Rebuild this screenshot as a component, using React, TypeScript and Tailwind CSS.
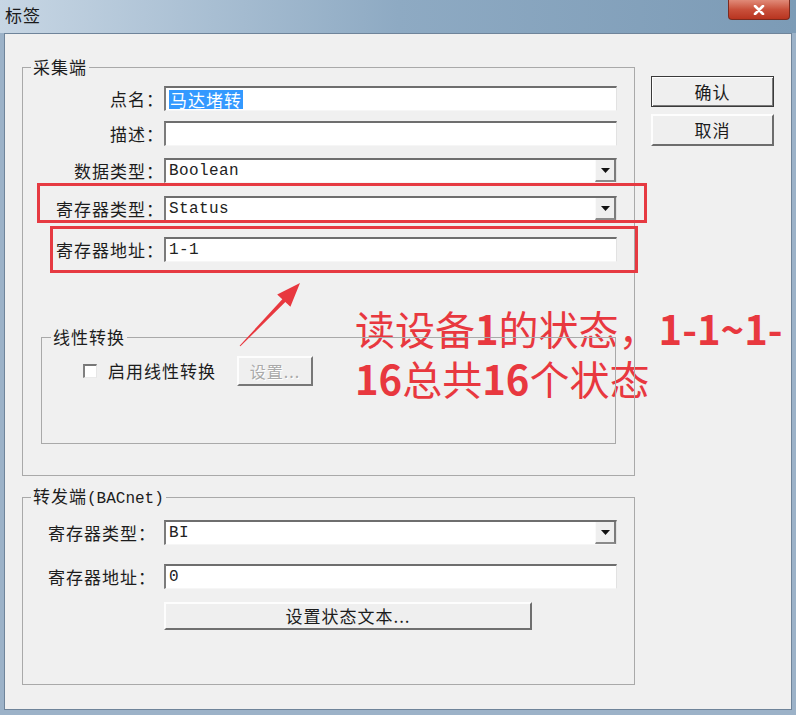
import type { ReactNode } from "react";

// Classic Windows sunken edit box
function Field({ children, dropdown, mono }: { children?: ReactNode; dropdown?: boolean; mono?: boolean }) {
  return (
    <div className="flex h-[25px] w-[453px] border-t-2 border-l-2 border-r border-b border-t-[#6e6e6e] border-l-[#7b7b7b] border-r-[#e2e2e2] border-b-[#f6f6f6] bg-white">
      <div
        className={
          mono
            ? "flex flex-1 items-center pl-[3px] font-['Liberation_Mono',monospace] text-[16px] tracking-[0.4px] text-[#222]"
            : "flex flex-1 items-center pl-[1px] text-[16px]"
        }
      >
        {children}
      </div>
      {dropdown && (
        <div className="flex h-full w-[21px] items-center justify-center border-r-2 border-b-2 border-l border-r-[#7c7c7c] border-b-[#8a8a8a] border-l-[#fafafa] bg-[#efefef]">
          <svg width="9" height="5" viewBox="0 0 9 5">
            <polygon points="0,0 9,0 4.5,5" fill="#111" />
          </svg>
        </div>
      )}
    </div>
  );
}

function Label({ text, className }: { text: string; className: string }) {
  return <div className={className + " text-right text-[17px] leading-[25px] tracking-[1px]"}>{text}</div>;
}

export default function App() {
  return (
    <div className="relative h-[715px] w-[796px] overflow-hidden bg-[#9cb2c8] font-['Noto_Sans_CJK_SC',sans-serif] text-[#1c1c1c]">
      {/* title bar */}
      <div className="relative flex h-[33px] items-start bg-gradient-to-r from-[#c7d6e4] via-[#8eaac3] to-[#7c9bb6]">
        <span className="pl-[5px] pt-[5px] text-[17px] leading-[20px] tracking-[1px] text-[#1a1a1a]">标签</span>
        <div className="absolute right-[6px] top-0 flex h-[20px] w-[62px] items-center justify-center rounded-b-[4px] border border-t-0 border-[#7d2a1e] bg-gradient-to-b from-[#e08a78] via-[#c9503b] to-[#b8341f]">
          <svg width="12" height="10" viewBox="0 0 12 10">
            <path d="M2 1 L10 9 M10 1 L2 9" stroke="#fff" strokeWidth="2.6" strokeLinecap="round" />
          </svg>
        </div>
      </div>

      {/* dialog body */}
      <div className="relative isolate mx-[4px] flex h-[677px] border border-[#6f849a] bg-[#f0f0f0] pl-[17px] pt-[23px]">
        {/* annotation text sits under the group box lines */}
        <div className="absolute left-[350px] top-[274px] -z-10 flex flex-col gap-[10px] whitespace-nowrap text-[40px] leading-[40px] text-[#e8383f]">
          <div>
            读设备<span className="font-bold">1</span>的状态，<span className="font-bold">1-1~1-</span>
          </div>
          <div>
            <span className="font-bold">16</span>总共<span className="font-bold">16</span>个状态
          </div>
        </div>

        <div className="flex flex-col">
          {/* 采集端 */}
          <fieldset className="w-[613px] border border-[#a9a9a9] pb-[31px]">
            <legend className="ml-[8px] px-[2px] text-[17px] leading-[20px] tracking-[1px]">采集端</legend>

            <div className="mt-[9px] flex">
              <Label text="点名：" className="w-[141px]" />
              <Field>
                <span className="ml-[2px] bg-[#3399ff] px-[1px] text-[17px] leading-[19px] tracking-[1px] text-white">马达堵转</span>
              </Field>
            </div>
            <div className="mt-[10px] flex">
              <Label text="描述：" className="w-[141px]" />
              <Field />
            </div>
            <div className="mt-[12px] flex">
              <Label text="数据类型：" className="w-[141px]" />
              <Field dropdown mono>
                Boolean
              </Field>
            </div>
            <div className="mt-[13px] flex">
              <Label text="寄存器类型：" className="w-[141px]" />
              <Field dropdown mono>
                Status
              </Field>
            </div>
            <div className="mt-[16px] flex">
              <Label text="寄存器地址：" className="w-[141px]" />
              <Field mono>1-1</Field>
            </div>

            {/* 线性转换 */}
            <fieldset className="ml-[18px] mt-[65px] w-[575px] border border-[#a9a9a9] pb-[57px]">
              <legend className="ml-[9px] px-[2px] text-[17px] leading-[20px] tracking-[1px]">线性转换</legend>
              <div className="mt-[9px] flex h-[30px] items-center">
                <div className="ml-[41px] h-[14px] w-[14px] border-t-2 border-l-2 border-r border-b border-t-[#777] border-l-[#808080] border-r-[#e6e6e6] border-b-[#eaeaea] bg-white" />
                <span className="ml-[11px] text-[17px] leading-[20px] tracking-[1px]">启用线性转换</span>
                <div className="ml-[21px] flex h-[30px] w-[76px] items-center justify-center border-2 border-t-[#fdfdfd] border-l-[#fdfdfd] border-r-[#777] border-b-[#777] bg-[#efefef] text-[16px] tracking-[1px] text-[#a9a9a9] [text-shadow:1px_1px_0_#fff]">
                  设置...
                </div>
              </div>
            </fieldset>
          </fieldset>

          {/* 转发端 */}
          <fieldset className="mt-[10px] w-[613px] border border-[#a9a9a9] pb-[54px]">
            <legend className="ml-[8px] px-[2px] text-[17px] leading-[20px] tracking-[1px]">
              转发端<span className="font-['Liberation_Mono',monospace] text-[16px] tracking-normal">(BACnet)</span>
            </legend>
            <div className="mt-[11px] flex">
              <Label text="寄存器类型：" className="mr-[8px] w-[133px]" />
              <Field dropdown mono>
                BI
              </Field>
            </div>
            <div className="mt-[19px] flex">
              <Label text="寄存器地址：" className="mr-[8px] w-[133px]" />
              <Field mono>0</Field>
            </div>
            <div className="ml-[141px] mt-[13px] flex h-[28px] w-[368px] items-center justify-center border-2 border-t-[#fdfdfd] border-l-[#fdfdfd] border-r-[#6f6f6f] border-b-[#6f6f6f] bg-[#efefef] text-[17px] tracking-[1px]">
              设置状态文本...
            </div>
          </fieldset>
        </div>

        {/* right-hand buttons */}
        <div className="ml-[16px] mt-[19px] flex flex-col gap-[7px]">
          <div className="flex h-[31px] w-[123px] items-center justify-center border border-[#3a3a3a] bg-[#efefef] text-[17px] tracking-[1px] shadow-[inset_1px_1px_0_#fff,inset_-1px_-1px_0_#7a7a7a]">
            确认
          </div>
          <div className="flex h-[32px] w-[123px] items-center justify-center border-2 border-t-[#fdfdfd] border-l-[#fdfdfd] border-r-[#6d6d6d] border-b-[#6d6d6d] bg-[#efefef] text-[17px] tracking-[1px]">
            取消
          </div>
        </div>
      </div>

      {/* red annotation boxes */}
      <div className="absolute left-[37px] top-[183px] h-[40px] w-[610px] border-[3px] border-[#e63a42]" />
      <div className="absolute left-[50px] top-[226px] h-[47px] w-[588px] border-[3px] border-[#e63a42]" />

      {/* red arrow */}
      <svg className="pointer-events-none absolute left-0 top-0" width="796" height="715" viewBox="0 0 796 715">
        <polygon
          points="239.6,345.7 282.3,299.3 277.2,294.6 300,283 290.4,306.8 285.3,302.1 240.4,346.3"
          fill="#e8383f"
        />
      </svg>
    </div>
  );
}
